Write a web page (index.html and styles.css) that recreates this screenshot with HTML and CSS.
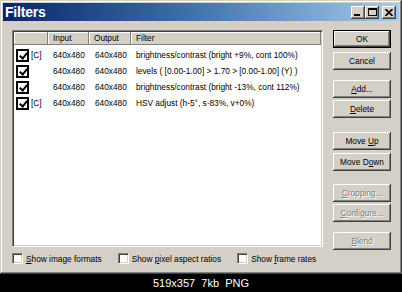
FILE: index.html
```html
<!DOCTYPE html>
<html lang="en">

<head>
    <meta charset="UTF-8">
    <title>Filters</title>
    <link rel="stylesheet" href="styles.css">
</head>

<body>
    <div class="window">
        <!-- Barra de titulo -->
        <div class="titlebar">
            <span class="title">Filters</span>
            <div class="caption-buttons">
                <div class="cap-btn">
                    <svg width="8" height="7" viewBox="0 0 8 7"><rect x="0" y="5" width="6" height="2" fill="#000"/></svg>
                </div>
                <div class="cap-btn">
                    <svg width="9" height="8" viewBox="0 0 9 8"><rect x="0.5" y="0.5" width="8" height="7" fill="none" stroke="#000"/><rect x="0" y="0" width="9" height="2" fill="#000"/></svg>
                </div>
                <div class="cap-btn close">
                    <svg width="8" height="7" viewBox="0 0 8 7"><path d="M0.5 0 L7.5 7 M7.5 0 L0.5 7" stroke="#000" stroke-width="1.6"/></svg>
                </div>
            </div>
        </div>

        <div class="dialog">
            <div class="left-col">
                <div class="listbox">
                    <div class="list-header">
                        <div class="hcell"></div>
                        <div class="hcell">Input</div>
                        <div class="hcell">Output</div>
                        <div class="hcell">Filter</div>
                    </div>
                    <div class="list-rows">
                        <div class="row">
                            <div class="cell first"><span class="check"></span><span class="tag">[C]</span></div>
                            <div class="cell input">640x480</div>
                            <div class="cell output">640x480</div>
                            <div class="cell filter">brightness/contrast (bright +9%, cont 100%)</div>
                        </div>
                        <div class="row">
                            <div class="cell first"><span class="check"></span></div>
                            <div class="cell input">640x480</div>
                            <div class="cell output">640x480</div>
                            <div class="cell filter">levels ( [0.00-1.00] &gt; 1.70 &gt; [0.00-1.00] (Y) )</div>
                        </div>
                        <div class="row">
                            <div class="cell first"><span class="check"></span></div>
                            <div class="cell input">640x480</div>
                            <div class="cell output">640x480</div>
                            <div class="cell filter">brightness/contrast (bright -13%, cont 112%)</div>
                        </div>
                        <div class="row">
                            <div class="cell first"><span class="check"></span><span class="tag">[C]</span></div>
                            <div class="cell input">640x480</div>
                            <div class="cell output">640x480</div>
                            <div class="cell filter">HSV adjust (h-5°, s·83%, v+0%)</div>
                        </div>
                    </div>
                </div>

                <div class="options">
                    <label class="opt"><span class="box"></span><span><u>S</u>how image formats</span></label>
                    <label class="opt"><span class="box"></span><span>Show <u>p</u>ixel aspect ratios</span></label>
                    <label class="opt"><span class="box"></span><span>Show <u>f</u>rame rates</span></label>
                </div>
            </div>

            <!-- Botones -->
            <div class="buttons">
                <div class="group g-main">
                    <div class="btn default"><span>OK</span></div>
                    <div class="btn"><span>Cancel</span></div>
                </div>
                <div class="group g-edit">
                    <div class="btn"><span><u>A</u>dd...</span></div>
                    <div class="btn"><span><u>D</u>elete</span></div>
                </div>
                <div class="group g-move">
                    <div class="btn"><span>Move <u>U</u>p</span></div>
                    <div class="btn"><span>Move D<u>o</u>wn</span></div>
                </div>
                <div class="group g-config">
                    <div class="btn disabled"><span><u>C</u>ropping...</span></div>
                    <div class="btn disabled"><span><u>C</u>onfigure...</span></div>
                </div>
                <div class="group g-blend">
                    <div class="btn disabled"><span><u>B</u>lend</span></div>
                </div>
            </div>
        </div>
    </div>

    <div class="caption">519x357&nbsp; 7kb&nbsp; PNG</div>
</body>

</html>
```

FILE: styles.css
```css
:root {
    --face: #d4d0c8;
    --shadow: #808080;
    --dark: #404040;
    --light: #ffffff;
}

body {
    margin: 0;
    background: #000;
    font-family: 'Liberation Sans', Arial, sans-serif;
    font-size: 8.3px;
    color: #000;
}

.window {
    width: 402px;
    height: 274px;
    box-sizing: border-box;
    background: var(--face);
    padding: 3px;
    display: flex;
    flex-direction: column;
    box-shadow: inset -1px -1px var(--dark), inset 1px 1px var(--face), inset -2px -2px var(--shadow), inset 2px 2px var(--light);
}

.titlebar {
    height: 18px;
    background: linear-gradient(90deg, #0a246a 0%, #3a6ea5 45%, #a6caf0 100%);
    display: flex;
    align-items: center;
    justify-content: space-between;
    padding: 0 3px 0 2px;
}

.title {
    color: #fff;
    font-weight: bold;
    font-size: 14px;
    letter-spacing: -0.2px;
}

.caption-buttons {
    display: flex;
    align-items: center;
}

.cap-btn {
    width: 14px;
    height: 13px;
    box-sizing: border-box;
    background: var(--face);
    display: flex;
    align-items: center;
    justify-content: center;
    box-shadow: inset -1px -1px var(--dark), inset 1px 1px var(--light), inset -2px -2px var(--shadow);
}

.cap-btn.close {
    margin-left: 3px;
}

.dialog {
    flex: 1;
    display: flex;
    gap: 10px;
    padding: 9px 7px 0 9px;
}

.left-col {
    width: 311px;
    flex-shrink: 0;
    display: flex;
    flex-direction: column;
}

.listbox {
    width: 311px;
    height: 217px;
    box-sizing: border-box;
    background: #fff;
    border-top: 1px solid var(--shadow);
    border-left: 1px solid var(--shadow);
    border-right: 1px solid var(--light);
    border-bottom: 1px solid var(--light);
    box-shadow: inset 1px 1px var(--dark), inset -1px -1px var(--face);
    padding: 1px;
}

.list-header {
    display: grid;
    grid-template-columns: 34px 41px 42px 1fr;
    height: 13px;
}

.hcell {
    background: var(--face);
    box-shadow: inset -1px -1px var(--shadow), inset 1px 1px var(--light);
    padding-left: 5px;
    line-height: 12px;
}

.list-rows {
    padding-top: 2px;
}

.row {
    display: grid;
    grid-template-columns: 34px 41px 42px 1fr;
    height: 16px;
    align-items: center;
}

.cell {
    white-space: nowrap;
}

.cell.first {
    display: flex;
    align-items: center;
    padding-left: 2px;
}

.cell.input {
    padding-left: 5px;
}

.cell.output {
    padding-left: 6px;
}

.cell.filter {
    padding-left: 5px;
}

.check {
    width: 13px;
    height: 13px;
    box-sizing: border-box;
    border: 2px solid #000;
    background: #fff;
    position: relative;
}

.check::after {
    content: "";
    position: absolute;
    left: 3px;
    top: 0px;
    width: 3px;
    height: 6px;
    border-right: 2px solid #000;
    border-bottom: 2px solid #000;
    transform: rotate(40deg);
}

.tag {
    margin-left: 2px;
}

.options {
    display: flex;
    align-items: center;
    height: 11px;
    margin-top: 6px;
}

.opt {
    display: flex;
    align-items: center;
    gap: 3px;
    margin-right: 16px;
    white-space: nowrap;
    flex-shrink: 0;
}

.box {
    width: 11px;
    height: 11px;
    box-sizing: border-box;
    background: #fff;
    border-top: 1px solid var(--shadow);
    border-left: 1px solid var(--shadow);
    border-right: 1px solid var(--light);
    border-bottom: 1px solid var(--light);
    box-shadow: inset 1px 1px var(--dark), inset -1px -1px var(--face);
}

.buttons {
    display: flex;
    flex-direction: column;
}

.group {
    display: flex;
    flex-direction: column;
    gap: 2px;
}

.g-main {
    gap: 4px;
}

.g-edit {
    margin-top: 10px;
}

.g-move {
    margin-top: 14px;
    gap: 3px;
}

.g-config {
    margin-top: 13px;
}

.g-blend {
    margin-top: 10px;
}

.btn {
    width: 58px;
    height: 18px;
    box-sizing: border-box;
    background: var(--face);
    display: flex;
    align-items: center;
    justify-content: center;
    white-space: nowrap;
    box-shadow: inset -1px -1px var(--dark), inset 1px 1px var(--light), inset -2px -2px var(--shadow);
}

.btn.default {
    border: 1px solid #000;
}

.btn.disabled {
    color: var(--shadow);
    text-shadow: 1px 1px var(--light);
}

.caption {
    height: 18px;
    line-height: 18px;
    text-align: center;
    color: #fff;
    font-size: 11px;
}
```
